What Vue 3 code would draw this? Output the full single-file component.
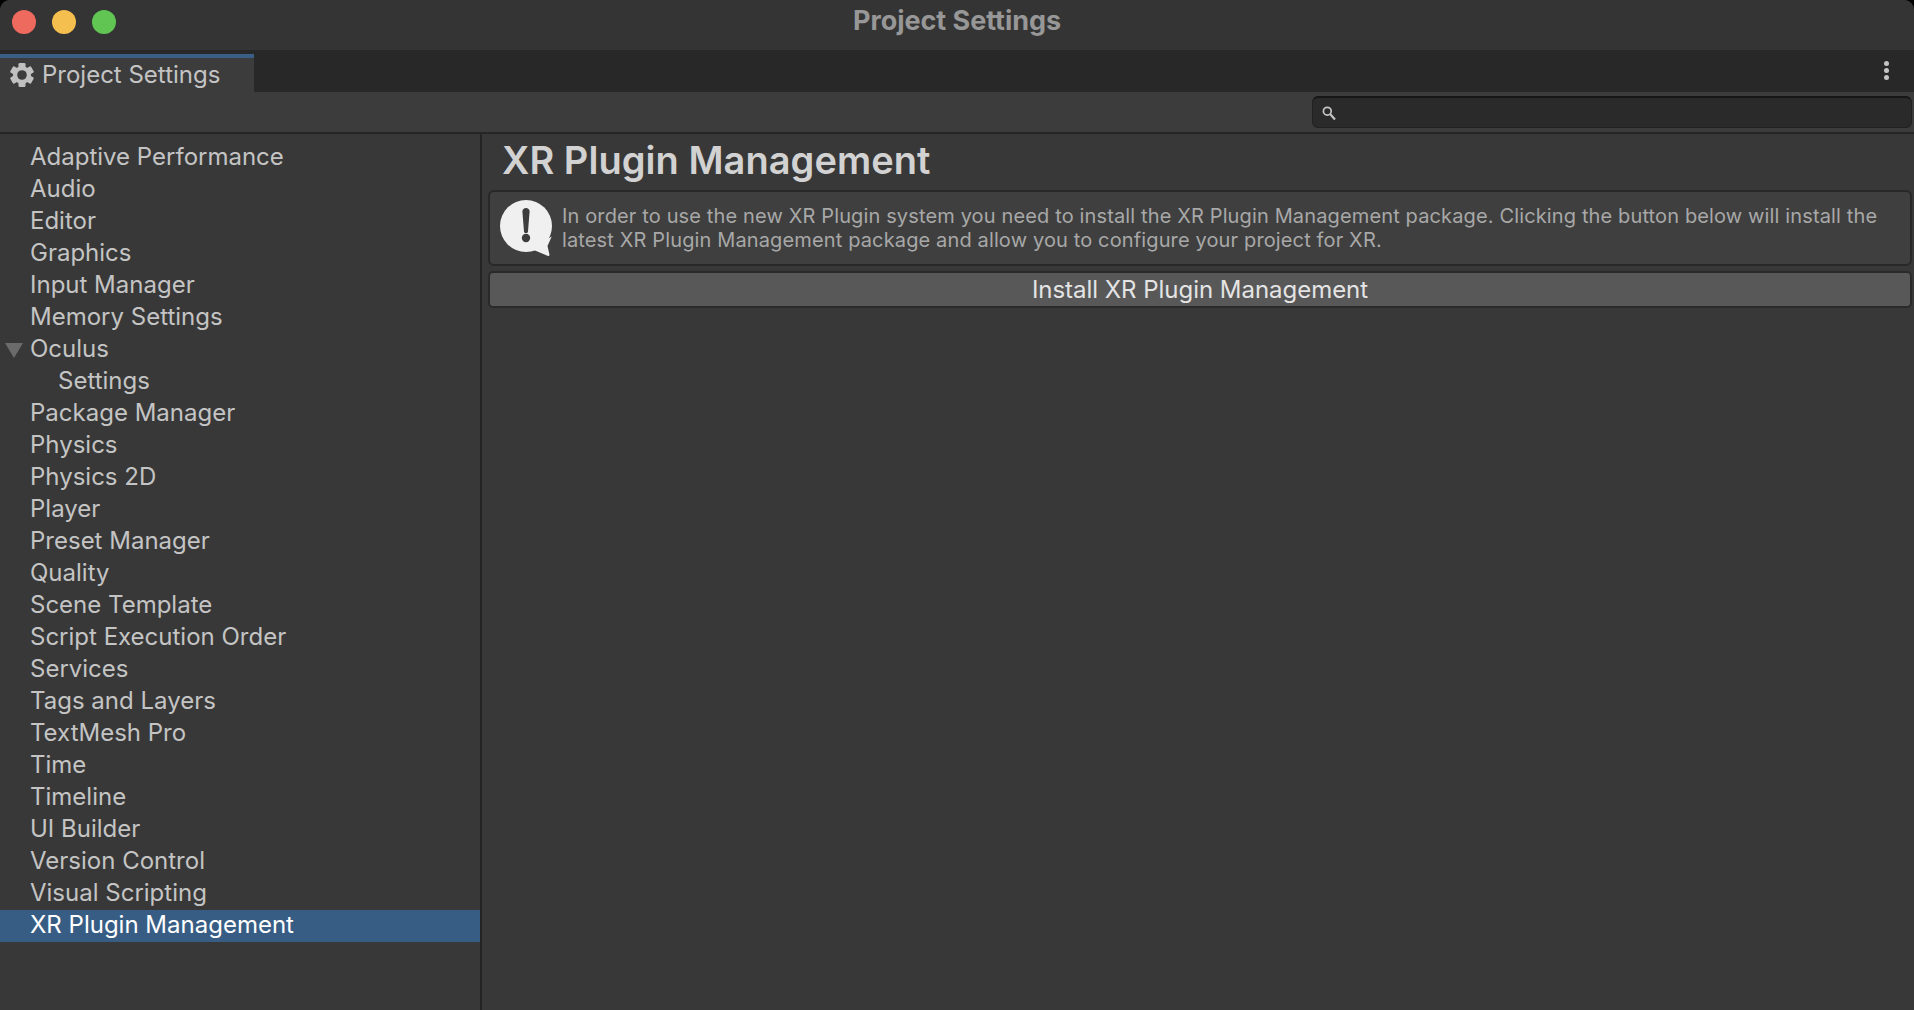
<script setup>
const items = [
  { label: 'Adaptive Performance' }, { label: 'Audio' }, { label: 'Editor' }, { label: 'Graphics' },
  { label: 'Input Manager' }, { label: 'Memory Settings' }, { label: 'Oculus', open: true },
  { label: 'Settings', child: true }, { label: 'Package Manager' }, { label: 'Physics' },
  { label: 'Physics 2D' }, { label: 'Player' }, { label: 'Preset Manager' }, { label: 'Quality' },
  { label: 'Scene Template' }, { label: 'Script Execution Order' }, { label: 'Services' },
  { label: 'Tags and Layers' }, { label: 'TextMesh Pro' }, { label: 'Time' }, { label: 'Timeline' },
  { label: 'UI Builder' }, { label: 'Version Control' }, { label: 'Visual Scripting' },
  { label: 'XR Plugin Management', selected: true }
]
</script>

<template>
  <div class="window">
    <header class="titlebar">
      <div class="lights">
        <span class="light red"></span>
        <span class="light yellow"></span>
        <span class="light green"></span>
      </div>
      <div class="wintitle">Project Settings</div>
    </header>

    <div class="tabstrip">
      <div class="tab">
        <svg class="gear" width="24" height="24" viewBox="0 0 24 24">
          <circle cx="12" cy="12" r="9" fill="#c0c0c0"/>
          <g fill="#c0c0c0">
            <rect x="8.500" y="0" width="7" height="24" rx="1.200"/>
            <rect x="8.500" y="0" width="7" height="24" rx="1.200" transform="rotate(60 12 12)"/>
            <rect x="8.500" y="0" width="7" height="24" rx="1.200" transform="rotate(120 12 12)"/>
          </g>
          <circle cx="12" cy="12" r="4.800" fill="#3c3c3c"/>
        </svg>
        <span class="tablabel">Project Settings</span>
      </div>
      <div class="strip-fill">
        <span class="kebab"><i></i><i></i><i></i></span>
      </div>
    </div>

    <div class="toolbar">
      <div class="search">
        <svg width="14" height="14" viewBox="0 0 14 14">
          <circle cx="5.300" cy="5.200" r="3.900" fill="none" stroke="#c4c4c4" stroke-width="1.700"/>
          <path d="M8.300 8.200l4.700 5.300" stroke="#c4c4c4" stroke-width="2.200" fill="none"/>
        </svg>
      </div>
    </div>

    <main class="body">
      <nav class="sidebar">
        <div
          v-for="item in items"
          :key="item.label"
          class="row"
          :class="{ selected: item.selected, child: item.child }"
        >
          <span v-if="item.open" class="arrow"></span>
          {{ item.label }}
        </div>
      </nav>

      <section class="content">
        <h1 class="heading">XR Plugin Management</h1>
        <div class="helpbox">
          <svg class="info" width="54" height="56" viewBox="0 0 54 56">
            <circle cx="26" cy="26" r="26" fill="#f0f0f0"/>
            <path fill="#f0f0f0" d="M51.700 36.500L47.500 46l1.900 8.300c.2 1.400-.6 2-1.900 1.500L35 50.500l-6-1z"/>
            <path fill="#3d3d3d" d="M22.400 11.500c0-2.300 1.600-3.500 3.600-3.500s3.600 1.200 3.600 3.500L28 31.500c-.1 1.100-.9 1.600-2 1.600s-1.900-.5-2-1.600z"/>
            <circle cx="26" cy="38" r="4.200" fill="#3d3d3d"/>
          </svg>
          <p class="helptext">In order to use the new XR Plugin system you need to install the XR Plugin Management package. Clicking the button below will install the latest XR Plugin Management package and allow you to configure your project for XR.</p>
        </div>
        <button class="install">Install XR Plugin Management</button>
      </section>
    </main>
  </div>
</template>

<style>
html, body { margin: 0; background: #000; overflow: hidden; }
</style>

<style scoped>
.window {
  width: 1914px;
  height: 1010px;
  display: flex;
  flex-direction: column;
  overflow: hidden;
  background: #383838;
  border-radius: 10px 10px 0 0;
  font-family: Inter, "Liberation Sans", sans-serif;
  color: #c4c4c4;
}
.titlebar {
  flex: 0 0 50px;
  height: 50px;
  background: #343434;
  position: relative;
  display: flex;
  align-items: center;
  justify-content: center;
}
.lights {
  position: absolute;
  left: 12px;
  top: 10px;
  display: flex;
  gap: 16px;
}
.light { width: 24px; height: 24px; border-radius: 50%; }
.red { background: #ee6a5f; }
.yellow { background: #f5bf4f; }
.green { background: #61c554; }
.wintitle {
  font-size: 27px;
  font-weight: 700;
  letter-spacing: -0.050px;
  color: #979797;
  margin-top: -9px;
}
.tabstrip {
  flex: 0 0 42px;
  display: flex;
  background: #282828;
}
.tab {
  width: 254px;
  margin-top: 4px;
  border-top: 4px solid #3a5f87;
  background: #3c3c3c;
  display: flex;
  align-items: center;
  gap: 8px;
  padding-left: 10px;
  box-sizing: border-box;
  font-size: 24px;
  color: #c4c4c4;
}
.gear { flex: none; }
.tablabel { margin-top: -2px; }
.strip-fill {
  flex: 1;
  display: flex;
  justify-content: flex-end;
  align-items: center;
  padding-right: 25px;
}
.kebab { display: flex; flex-direction: column; gap: 2.300px; margin-top: -1px; }
.kebab i { width: 5px; height: 5px; border-radius: 50%; background: #c4c4c4; display: block; }
.toolbar {
  flex: 0 0 42px;
  box-sizing: border-box;
  background: #3c3c3c;
  border-bottom: 2px solid #252525;
  display: flex;
  justify-content: flex-end;
  align-items: flex-start;
  padding: 4px 2px 0 0;
}
.search {
  width: 600px;
  height: 32px;
  box-sizing: border-box;
  background: #2a2a2a;
  border: 1px solid #212121;
  border-top: 2px solid #161616;
  border-radius: 6px;
  display: flex;
  align-items: center;
  padding-left: 9px;
}
.body { flex: 1; display: flex; min-height: 0; }
.sidebar {
  width: 480px;
  flex: none;
  padding-top: 8px;
  border-right: 2px solid #232323;
  font-size: 24px;
}
.row {
  height: 32px;
  line-height: 30px;
  padding-left: 30px;
  position: relative;
  white-space: nowrap;
  color: #c4c4c4;
}
.row.child { padding-left: 58px; }
.row.selected { background: #385d84; color: #fff; }
.arrow {
  position: absolute;
  left: 5px;
  top: 9px;
  width: 0;
  height: 0;
  border-left: 9px solid transparent;
  border-right: 9px solid transparent;
  border-top: 15px solid #6b6b6b;
}
.content {
  flex: 1;
  min-width: 0;
  padding: 0 2px 0 6px;
  display: flex;
  flex-direction: column;
}
.heading {
  margin: 0;
  height: 56px;
  line-height: 52px;
  padding-left: 14px;
  font-size: 38px;
  font-weight: 600;
  letter-spacing: 0.050px;
  color: #d2d2d2;
}
.helpbox {
  height: 76px;
  box-sizing: border-box;
  background: #3f3f3f;
  border: 2px solid #282828;
  border-radius: 6px;
  display: flex;
  align-items: center;
  padding-left: 10px;
  gap: 8px;
}
.info { flex: none; margin-top: 0; }
.helptext {
  margin: 0;
  font-size: 20px;
  line-height: 24px;
  color: #a8a8a8;
  letter-spacing: 0.135px;
}
.install {
  margin-top: 5px;
  height: 37px;
  box-sizing: border-box;
  background: #585858;
  border: 2px solid #2a2a2a;
  border-radius: 5px;
  color: #e4e4e4;
  font-family: inherit;
  font-size: 24px;
  letter-spacing: -0.030px;
  padding: 0;
}
</style>
